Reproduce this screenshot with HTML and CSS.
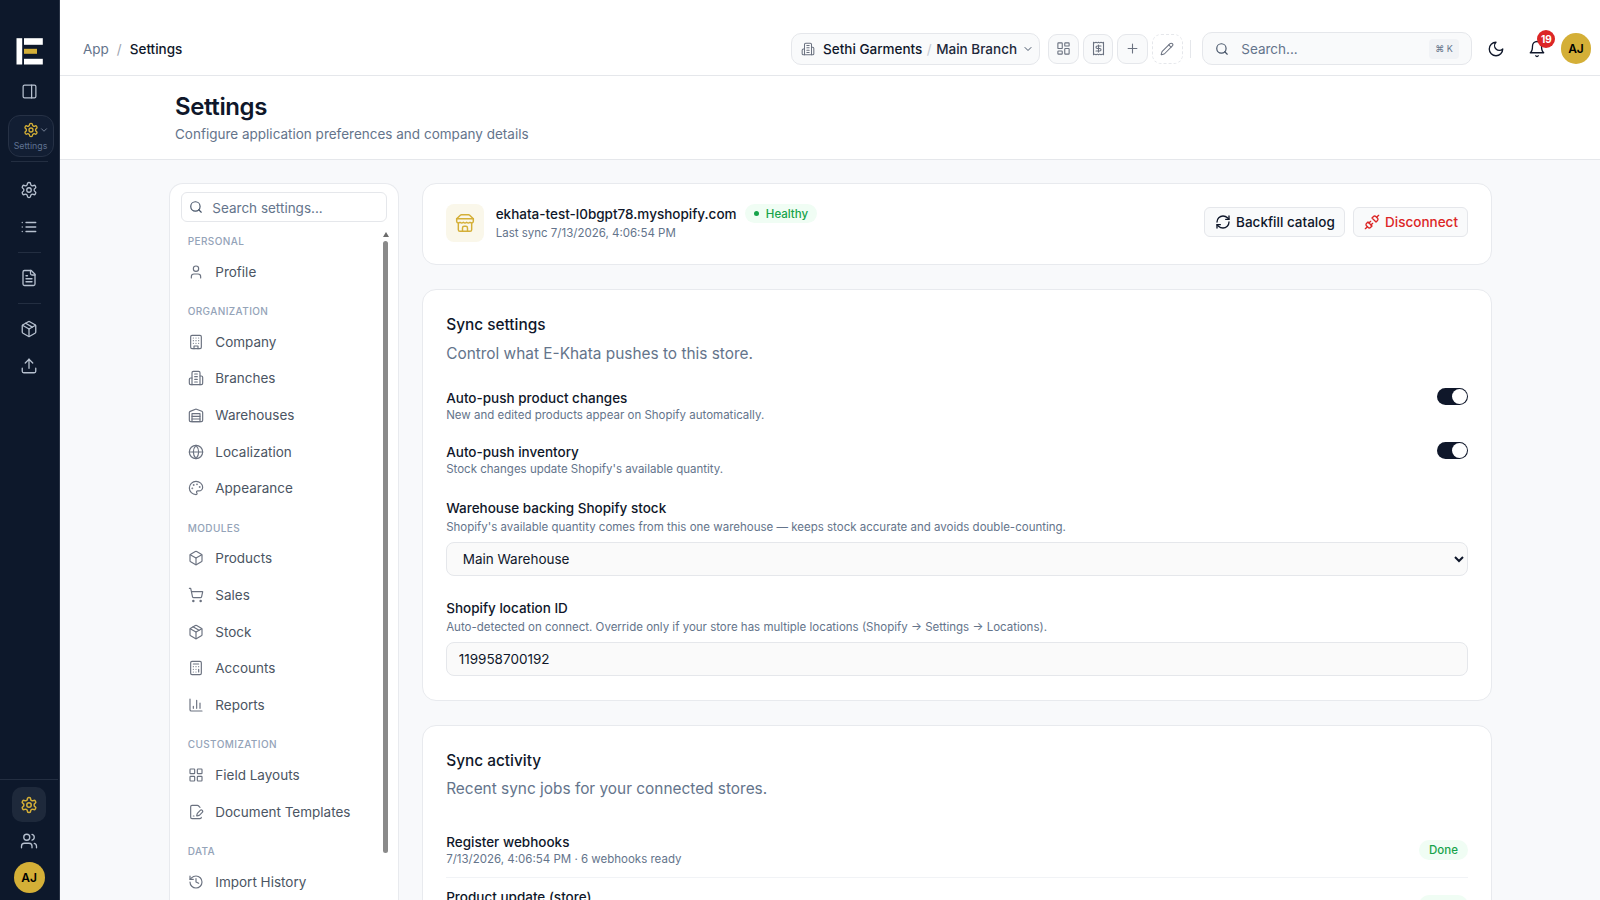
FILE: index.html
```html
<!DOCTYPE html>
<html lang="en">
<head>
<meta charset="utf-8">
<title>Settings</title>
<link rel="stylesheet" href="styles.css">
</head>
<body>
<svg class="sprite" xmlns="http://www.w3.org/2000/svg">
<symbol id="i-panel" viewBox="0 0 24 24"><rect x="3" y="3" width="18" height="18" rx="2"/><path d="M15 3v18"/></symbol>
<symbol id="i-gear" viewBox="0 0 24 24"><path d="M12.22 2h-.44a2 2 0 0 0-2 2v.18a2 2 0 0 1-1 1.73l-.43.25a2 2 0 0 1-2 0l-.15-.08a2 2 0 0 0-2.73.73l-.22.38a2 2 0 0 0 .73 2.73l.15.1a2 2 0 0 1 1 1.72v.51a2 2 0 0 1-1 1.74l-.15.09a2 2 0 0 0-.73 2.73l.22.38a2 2 0 0 0 2.73.73l.15-.08a2 2 0 0 1 2 0l.43.25a2 2 0 0 1 1 1.73V20a2 2 0 0 0 2 2h.44a2 2 0 0 0 2-2v-.18a2 2 0 0 1 1-1.73l.43-.25a2 2 0 0 1 2 0l.15.08a2 2 0 0 0 2.73-.73l.22-.39a2 2 0 0 0-.73-2.73l-.15-.08a2 2 0 0 1-1-1.74v-.5a2 2 0 0 1 1-1.74l.15-.09a2 2 0 0 0 .73-2.73l-.22-.38a2 2 0 0 0-2.73-.73l-.15.08a2 2 0 0 1-2 0l-.43-.25a2 2 0 0 1-1-1.73V4a2 2 0 0 0-2-2z"/><circle cx="12" cy="12" r="3"/></symbol>
<symbol id="i-list" viewBox="0 0 24 24"><path d="M3 12h.01M3 18h.01M3 6h.01M8 12h13M8 18h13M8 6h13"/></symbol>
<symbol id="i-file" viewBox="0 0 24 24"><path d="M15 2H6a2 2 0 0 0-2 2v16a2 2 0 0 0 2 2h12a2 2 0 0 0 2-2V7Z"/><path d="M14 2v4a2 2 0 0 0 2 2h4"/><path d="M10 9H8M16 13H8M16 17H8"/></symbol>
<symbol id="i-package" viewBox="0 0 24 24"><path d="M11 21.73a2 2 0 0 0 2 0l7-4A2 2 0 0 0 21 16V8a2 2 0 0 0-1-1.73l-7-4a2 2 0 0 0-2 0l-7 4A2 2 0 0 0 3 8v8a2 2 0 0 0 1 1.73z"/><path d="M12 22V12"/><path d="m3.3 7 8.7 5 8.7-5"/><path d="m7.5 4.27 9 5.15"/></symbol>
<symbol id="i-box" viewBox="0 0 24 24"><path d="M21 8a2 2 0 0 0-1-1.73l-7-4a2 2 0 0 0-2 0l-7 4A2 2 0 0 0 3 8v8a2 2 0 0 0 1 1.73l7 4a2 2 0 0 0 2 0l7-4A2 2 0 0 0 21 16Z"/><path d="m3.3 7 8.7 5 8.7-5"/><path d="M12 22V12"/></symbol>
<symbol id="i-upload" viewBox="0 0 24 24"><path d="M21 15v4a2 2 0 0 1-2 2H5a2 2 0 0 1-2-2v-4"/><path d="m17 8-5-5-5 5"/><path d="M12 3v12"/></symbol>
<symbol id="i-users" viewBox="0 0 24 24"><path d="M16 21v-2a4 4 0 0 0-4-4H6a4 4 0 0 0-4 4v2"/><circle cx="9" cy="7" r="4"/><path d="M22 21v-2a4 4 0 0 0-3-3.87"/><path d="M16 3.13a4 4 0 0 1 0 7.75"/></symbol>
<symbol id="i-chevron" viewBox="0 0 24 24"><path d="m6 9 6 6 6-6"/></symbol>
<symbol id="i-search" viewBox="0 0 24 24"><circle cx="11" cy="11" r="8"/><path d="m21 21-4.3-4.3"/></symbol>
<symbol id="i-user" viewBox="0 0 24 24"><path d="M19 21v-2a4 4 0 0 0-4-4H9a4 4 0 0 0-4 4v2"/><circle cx="12" cy="7" r="4"/></symbol>
<symbol id="i-building" viewBox="0 0 24 24"><rect x="4" y="2" width="16" height="20" rx="2"/><path d="M9 22v-4h6v4"/><path d="M8 6h.01M16 6h.01M12 6h.01M12 10h.01M12 14h.01M16 10h.01M16 14h.01M8 10h.01M8 14h.01"/></symbol>
<symbol id="i-building2" viewBox="0 0 24 24"><path d="M6 22V4a2 2 0 0 1 2-2h8a2 2 0 0 1 2 2v18Z"/><path d="M6 12H4a2 2 0 0 0-2 2v6a2 2 0 0 0 2 2h2"/><path d="M18 9h2a2 2 0 0 1 2 2v9a2 2 0 0 1-2 2h-2"/><path d="M10 6h4M10 10h4M10 14h4M10 18h4"/></symbol>
<symbol id="i-warehouse" viewBox="0 0 24 24"><path d="M22 8.35V20a2 2 0 0 1-2 2H4a2 2 0 0 1-2-2V8.35A2 2 0 0 1 3.26 6.5l8-3.2a2 2 0 0 1 1.48 0l8 3.2A2 2 0 0 1 22 8.35Z"/><path d="M6 18h12M6 14h12"/><rect x="6" y="10" width="12" height="12"/></symbol>
<symbol id="i-globe" viewBox="0 0 24 24"><circle cx="12" cy="12" r="10"/><path d="M12 2a14.5 14.5 0 0 0 0 20 14.5 14.5 0 0 0 0-20"/><path d="M2 12h20"/></symbol>
<symbol id="i-palette" viewBox="0 0 24 24"><circle cx="13.5" cy="6.5" r=".5"/><circle cx="17.5" cy="10.5" r=".5"/><circle cx="8.5" cy="7.5" r=".5"/><circle cx="6.5" cy="12.5" r=".5"/><path d="M12 2C6.5 2 2 6.5 2 12s4.5 10 10 10c.926 0 1.648-.746 1.648-1.688 0-.437-.18-.835-.437-1.125-.29-.289-.438-.652-.438-1.125a1.64 1.64 0 0 1 1.668-1.668h1.996c3.051 0 5.555-2.503 5.555-5.554C21.965 6.012 17.461 2 12 2z"/></symbol>
<symbol id="i-cart" viewBox="0 0 24 24"><circle cx="8" cy="21" r="1"/><circle cx="19" cy="21" r="1"/><path d="M2.05 2.05h2l2.66 12.42a2 2 0 0 0 2 1.58h9.78a2 2 0 0 0 1.95-1.57l1.65-7.43H5.12"/></symbol>
<symbol id="i-calc" viewBox="0 0 24 24"><rect x="4" y="2" width="16" height="20" rx="2"/><path d="M8 6h8M16 14v4M16 10h.01M12 10h.01M8 10h.01M12 14h.01M8 14h.01M12 18h.01M8 18h.01"/></symbol>
<symbol id="i-chart" viewBox="0 0 24 24"><path d="M3 3v16a2 2 0 0 0 2 2h16"/><path d="M18 17V9M13 17V5M8 17v-3"/></symbol>
<symbol id="i-grid" viewBox="0 0 24 24"><rect x="3" y="3" width="7" height="7" rx="1"/><rect x="14" y="3" width="7" height="7" rx="1"/><rect x="14" y="14" width="7" height="7" rx="1"/><rect x="3" y="14" width="7" height="7" rx="1"/></symbol>
<symbol id="i-filepen" viewBox="0 0 24 24"><path d="m18 5-2.414-2.414A2 2 0 0 0 14.172 2H6a2 2 0 0 0-2 2v16a2 2 0 0 0 2 2h12a2 2 0 0 0 2-2"/><path d="M21.378 12.626a1 1 0 0 0-3.004-3.004l-4.01 4.012a2 2 0 0 0-.506.854l-.837 2.87a.5.5 0 0 0 .62.62l2.87-.837a2 2 0 0 0 .854-.506z"/><path d="M8 18h1"/></symbol>
<symbol id="i-history" viewBox="0 0 24 24"><path d="M3 12a9 9 0 1 0 9-9 9.75 9.75 0 0 0-6.74 2.74L3 8"/><path d="M3 3v5h5"/><path d="M12 7v5l4 2"/></symbol>
<symbol id="i-dash" viewBox="0 0 24 24"><rect x="3" y="3" width="7" height="9" rx="1"/><rect x="14" y="3" width="7" height="5" rx="1"/><rect x="14" y="12" width="7" height="9" rx="1"/><rect x="3" y="16" width="7" height="5" rx="1"/></symbol>
<symbol id="i-receipt" viewBox="0 0 24 24"><path d="M4 2v20l2-1 2 1 2-1 2 1 2-1 2 1 2-1 2 1V2l-2 1-2-1-2 1-2-1-2 1-2-1-2 1Z"/><path d="M16 8h-6a2 2 0 1 0 0 4h4a2 2 0 1 1 0 4H8"/><path d="M12 17.5v-11"/></symbol>
<symbol id="i-plus" viewBox="0 0 24 24"><path d="M5 12h14M12 5v14"/></symbol>
<symbol id="i-pencil" viewBox="0 0 24 24"><path d="M21.174 6.812a1 1 0 0 0-3.986-3.987L3.842 16.174a2 2 0 0 0-.5.83l-1.321 4.352a.5.5 0 0 0 .623.622l4.353-1.32a2 2 0 0 0 .83-.497z"/><path d="m15 5 4 4"/></symbol>
<symbol id="i-moon" viewBox="0 0 24 24"><path d="M12 3a6 6 0 0 0 9 9 9 9 0 1 1-9-9Z"/></symbol>
<symbol id="i-bell" viewBox="0 0 24 24"><path d="M6 8a6 6 0 0 1 12 0c0 7 3 9 3 9H3s3-2 3-9"/><path d="M10.3 21a1.94 1.94 0 0 0 3.4 0"/></symbol>
<symbol id="i-store" viewBox="0 0 24 24"><path d="m2 7 4.41-4.41A2 2 0 0 1 7.83 2h8.34a2 2 0 0 1 1.42.59L22 7"/><path d="M4 12v8a2 2 0 0 0 2 2h12a2 2 0 0 0 2-2v-8"/><path d="M15 22v-4a2 2 0 0 0-2-2h-2a2 2 0 0 0-2 2v4"/><path d="M2 7h20"/><path d="M22 7v3a2 2 0 0 1-2 2a2.7 2.7 0 0 1-1.59-.63.7.7 0 0 0-.82 0A2.7 2.7 0 0 1 16 12a2.7 2.7 0 0 1-1.59-.63.7.7 0 0 0-.82 0A2.7 2.7 0 0 1 12 12a2.7 2.7 0 0 1-1.59-.63.7.7 0 0 0-.82 0A2.7 2.7 0 0 1 8 12a2.7 2.7 0 0 1-1.59-.63.7.7 0 0 0-.82 0A2.7 2.7 0 0 1 4 12a2 2 0 0 1-2-2V7"/></symbol>
<symbol id="i-refresh" viewBox="0 0 24 24"><path d="M3 12a9 9 0 0 1 9-9 9.75 9.75 0 0 1 6.74 2.74L21 8"/><path d="M21 3v5h-5"/><path d="M21 12a9 9 0 0 1-9 9 9.75 9.75 0 0 1-6.74-2.74L3 16"/><path d="M8 16H3v5"/></symbol>
<symbol id="i-unplug" viewBox="0 0 24 24"><path d="m19 5 3-3"/><path d="m2 22 3-3"/><path d="M6.3 20.3a2.4 2.4 0 0 0 3.4 0L12 18l-6-6-2.3 2.3a2.4 2.4 0 0 0 0 3.4Z"/><path d="M7.5 13.5 10 11"/><path d="M10.5 16.5 13 14"/><path d="m12 6 6 6 2.3-2.3a2.4 2.4 0 0 0 0-3.4l-2.6-2.6a2.4 2.4 0 0 0-3.4 0Z"/></symbol>
</svg>

<div class="app">
  <aside class="rail">
    <svg class="logo" viewBox="0 0 27 27" aria-hidden="true">
      <rect x="0.5" y="0.2" width="5.7" height="26.3" fill="#fff"/>
      <rect x="8" y="0.2" width="18.8" height="6.6" fill="#fff"/>
      <rect x="8" y="10.8" width="13" height="5" fill="#d4af37"/>
      <rect x="8" y="20.8" width="18.8" height="5.7" fill="#fff"/>
    </svg>
    <svg class="ic rail-ic rail-panel"><use href="#i-panel"/></svg>
    <div class="rail-pill">
      <div class="rail-pill-top">
        <svg class="ic pill-gear"><use href="#i-gear"/></svg>
        <svg class="ic pill-chev"><use href="#i-chevron"/></svg>
      </div>
      <span class="pill-label">Settings</span>
    </div>
    <div class="rail-sep rail-sep-wide"></div>
    <svg class="ic rail-ic rail-a"><use href="#i-gear"/></svg>
    <svg class="ic rail-ic rail-a"><use href="#i-list"/></svg>
    <div class="rail-sep rail-sep-short"></div>
    <svg class="ic rail-ic rail-d"><use href="#i-file"/></svg>
    <div class="rail-sep rail-sep-short"></div>
    <svg class="ic rail-ic rail-d"><use href="#i-package"/></svg>
    <svg class="ic rail-ic rail-a"><use href="#i-upload"/></svg>
    <div class="rail-foot">
      <div class="rail-active"><svg class="ic pill-gear"><use href="#i-gear"/></svg></div>
      <svg class="ic rail-ic rail-users"><use href="#i-users"/></svg>
      <div class="avatar rail-avatar">AJ</div>
    </div>
  </aside>

  <div class="main">
    <header class="topbar">
      <nav class="crumbs"><span class="crumb-muted">App</span><span class="crumb-slash">/</span><span class="crumb-current">Settings</span></nav>
      <div class="top-right">
        <div class="ctx">
          <svg class="ic ctx-ic"><use href="#i-building2"/></svg>
          <span class="ctx-company">Sethi Garments</span>
          <span class="ctx-slash">/</span>
          <span class="ctx-branch">Main Branch</span>
          <svg class="ic ctx-chev"><use href="#i-chevron"/></svg>
        </div>
        <div class="tools">
          <div class="tool"><svg class="ic tool-ic"><use href="#i-dash"/></svg></div>
          <div class="tool"><svg class="ic tool-ic"><use href="#i-receipt"/></svg></div>
          <div class="tool"><svg class="ic tool-ic"><use href="#i-plus"/></svg></div>
          <div class="tool tool-dashed"><svg class="ic tool-pen"><use href="#i-pencil"/></svg></div>
        </div>
        <div class="top-sep"></div>
        <div class="global-search">
          <svg class="ic gs-ic"><use href="#i-search"/></svg>
          <span class="gs-text">Search...</span>
          <kbd class="gs-kbd">⌘ K</kbd>
        </div>
        <svg class="ic moon"><use href="#i-moon"/></svg>
        <div class="bell-wrap">
          <svg class="ic bell"><use href="#i-bell"/></svg>
          <span class="badge">19</span>
        </div>
        <div class="avatar top-avatar">AJ</div>
      </div>
    </header>

    <section class="page-head">
      <h1 class="page-title">Settings</h1>
      <p class="page-sub">Configure application preferences and company details</p>
    </section>

    <div class="content">
      <aside class="side-card">
        <div class="side-search">
          <svg class="ic ss-ic"><use href="#i-search"/></svg>
          <span class="ss-text">Search settings...</span>
        </div>
        <div class="side-scroll">
          <nav class="side-nav">
            <div class="nav-label">PERSONAL</div>
            <a class="nav-item"><svg class="ic nav-ic"><use href="#i-user"/></svg>Profile</a>
            <div class="nav-label nav-label-gap">ORGANIZATION</div>
            <a class="nav-item"><svg class="ic nav-ic"><use href="#i-building"/></svg>Company</a>
            <a class="nav-item"><svg class="ic nav-ic"><use href="#i-building2"/></svg>Branches</a>
            <a class="nav-item"><svg class="ic nav-ic"><use href="#i-warehouse"/></svg>Warehouses</a>
            <a class="nav-item"><svg class="ic nav-ic"><use href="#i-globe"/></svg>Localization</a>
            <a class="nav-item"><svg class="ic nav-ic"><use href="#i-palette"/></svg>Appearance</a>
            <div class="nav-label nav-label-gap">MODULES</div>
            <a class="nav-item"><svg class="ic nav-ic"><use href="#i-box"/></svg>Products</a>
            <a class="nav-item"><svg class="ic nav-ic"><use href="#i-cart"/></svg>Sales</a>
            <a class="nav-item"><svg class="ic nav-ic"><use href="#i-package"/></svg>Stock</a>
            <a class="nav-item"><svg class="ic nav-ic"><use href="#i-calc"/></svg>Accounts</a>
            <a class="nav-item"><svg class="ic nav-ic"><use href="#i-chart"/></svg>Reports</a>
            <div class="nav-label nav-label-gap">CUSTOMIZATION</div>
            <a class="nav-item"><svg class="ic nav-ic"><use href="#i-grid"/></svg>Field Layouts</a>
            <a class="nav-item"><svg class="ic nav-ic"><use href="#i-filepen"/></svg>Document Templates</a>
            <div class="nav-label nav-label-gap">DATA</div>
            <a class="nav-item"><svg class="ic nav-ic"><use href="#i-history"/></svg>Import History</a>
          </nav>
          <div class="fake-scrollbar">
            <span class="sb-arrow"></span>
            <span class="sb-thumb"></span>
          </div>
        </div>
      </aside>

      <div class="panels">
        <section class="card store-card">
          <div class="store-icon"><svg class="ic store-ic"><use href="#i-store"/></svg></div>
          <div class="store-info">
            <div class="store-line">
              <span class="store-name">ekhata-test-l0bgpt78.myshopify.com</span>
              <span class="pill pill-health"><span class="dot"></span>Healthy</span>
            </div>
            <div class="store-sync">Last sync 7/13/2026, 4:06:54 PM</div>
          </div>
          <div class="store-actions">
            <button class="btn"><svg class="ic btn-ic"><use href="#i-refresh"/></svg>Backfill catalog</button>
            <button class="btn btn-danger"><svg class="ic btn-ic"><use href="#i-unplug"/></svg>Disconnect</button>
          </div>
        </section>

        <section class="card pad-card">
          <h2 class="card-title">Sync settings</h2>
          <p class="card-desc">Control what E-Khata pushes to this store.</p>
          <div class="toggle-row toggle-first">
            <div>
              <div class="field-label">Auto-push product changes</div>
              <div class="field-help">New and edited products appear on Shopify automatically.</div>
            </div>
            <span class="switch"></span>
          </div>
          <div class="toggle-row toggle-second">
            <div>
              <div class="field-label">Auto-push inventory</div>
              <div class="field-help">Stock changes update Shopify's available quantity.</div>
            </div>
            <span class="switch"></span>
          </div>
          <div class="field field-wh">
            <div class="field-label">Warehouse backing Shopify stock</div>
            <div class="field-help">Shopify's available quantity comes from this one warehouse — keeps stock accurate and avoids double-counting.</div>
            <select class="control control-select"><option>Main Warehouse</option></select>
          </div>
          <div class="field field-loc">
            <div class="field-label">Shopify location ID</div>
            <div class="field-help">Auto-detected on connect. Override only if your store has multiple locations (Shopify → Settings → Locations).</div>
            <input class="control" value="119958700192">
          </div>
        </section>

        <section class="card pad-card">
          <h2 class="card-title">Sync activity</h2>
          <p class="card-desc">Recent sync jobs for your connected stores.</p>
          <div class="job job-first">
            <div>
              <div class="field-label">Register webhooks</div>
              <div class="field-help">7/13/2026, 4:06:54 PM · 6 webhooks ready</div>
            </div>
            <span class="pill pill-done">Done</span>
          </div>
          <div class="job">
            <div>
              <div class="field-label">Product update (store)</div>
              <div class="field-help">7/13/2026, 4:06:10 PM</div>
            </div>
            <span class="pill pill-done">Done</span>
          </div>
        </section>
      </div>
    </div>
  </div>
</div>
</body>
</html>
```
FILE: styles.css
```css
* { box-sizing: border-box; }
html, body { margin: 0; height: 100%; overflow: hidden; }
body { font-family: Inter, "Liberation Sans", sans-serif; color: #0f172a; background: #fff; font-size: 13.5px; }
h1, h2, p { margin: 0; }
.sprite { display: none; }
.ic { fill: none; stroke: currentColor; stroke-width: 2; stroke-linecap: round; stroke-linejoin: round; flex: none; display: block; }

.app { display: flex; height: 900px; }

/* rail */
.rail { width: 60px; flex: none; height: 900px; background: #0d182b; border-right: 1px solid #2a3446; padding-right: 1px; display: flex; flex-direction: column; align-items: center; }
.logo { width: 27px; height: 27px; margin-top: 37.5px; flex: none; }
.rail-ic { width: 18px; height: 18px; color: #b6c0cf; stroke-width: 1.75; }
.rail-panel { width: 17px; height: 17px; margin-top: 18px; }
.rail-pill { width: 46px; height: 42px; margin-top: 15px; margin-left: 3px; border: 1px solid #263145; border-radius: 12px; background: #121e33; display: flex; flex-direction: column; align-items: center; padding-top: 6px; flex: none; }
.rail-pill-top { display: flex; align-items: center; margin-left: 11px; height: 16px; }
.pill-gear { width: 16px; height: 16px; color: #d4af37; }
.pill-chev { width: 10px; height: 10px; color: #8592a6; }
.pill-label { font-size: 8.8px; line-height: 11px; color: #5f7291; margin-top: 2.5px; }
.rail-sep { height: 1px; background: #232e41; flex: none; }
.rail-sep-wide { width: 37px; margin-top: 4px; }
.rail-a { margin-top: 19px; }
.rail-sep-short { width: 23px; margin-top: 16px; }
.rail-d { margin-top: 16px; }
.rail-foot { margin-top: auto; width: 100%; border-top: 1px solid #232e41; display: flex; flex-direction: column; align-items: center; padding-top: 7px; height: 121px; flex: none; }
.rail-active { width: 34px; height: 35px; border-radius: 10px; background: #1e293b; display: flex; align-items: center; justify-content: center; flex: none; }
.rail-active .pill-gear { width: 18px; height: 18px; }
.rail-users { margin-top: 10px; }
.avatar { border-radius: 50%; background: #d4af37; color: #000; font-weight: 600; display: flex; align-items: center; justify-content: center; flex: none; }
.rail-avatar { width: 31px; height: 31px; font-size: 12px; margin-top: 12px; }

/* main */
.main { flex: 1; min-width: 0; display: flex; flex-direction: column; height: 900px; }
.topbar { height: 76px; flex: none; padding: 22px 8.7px 0 23px; border-bottom: 1px solid #e5e7eb; display: flex; align-items: center; justify-content: space-between; background: #fff; }
.crumbs { display: flex; align-items: center; font-size: 13.5px; line-height: 20px; }
.crumb-muted { color: #64748b; }
.crumb-slash { color: #9ca3af; margin: 0 8px; }
.crumb-current { color: #0f172a; font-weight: 500; }
.top-right { display: flex; align-items: center; }
.ctx { width: 249px; height: 32px; background: #f9fafb; border: 1px solid #e5e7eb; border-radius: 10px; display: flex; align-items: center; padding: 0 0 0 9px; font-size: 13.5px; white-space: nowrap; }
.ctx-ic { width: 14px; height: 14px; color: #6b7280; stroke-width: 1.75; margin-right: 8px; }
.ctx-company { color: #0f172a; font-weight: 500; }
.ctx-slash { color: #c5cad3; margin: 0 4.5px; }
.ctx-branch { color: #1e293b; font-weight: 500; }
.ctx-chev { width: 12px; height: 12px; color: #475569; margin-left: 4.7px; }
.tools { display: flex; gap: 4px; margin-left: 8px; }
.tool { width: 30.67px; height: 30px; border: 1px solid #e5e7eb; border-radius: 9px; background: #f9fafb; display: flex; align-items: center; justify-content: center; }
.tool-dashed { border-style: dashed; background: #fff; }
.tool-ic { width: 15px; height: 15px; color: #6b7280; stroke-width: 1.75; }
.tool-pen { width: 14px; height: 14px; color: #6b7280; stroke-width: 1.75; }
.top-sep { width: 1px; height: 18px; background: #e5e7eb; margin: 0 11px 0 7px; }
.global-search { width: 270px; height: 33px; background: #f9fafb; border: 1px solid #e5e7eb; border-radius: 10px; display: flex; align-items: center; padding: 0 12px 0 12.3px; }
.gs-ic { width: 14px; height: 14px; color: #475569; margin-right: 12.3px; }
.gs-text { flex: 1; font-size: 13.5px; color: #64748b; }
.gs-kbd { font-family: Inter, "Noto Sans", "DejaVu Sans", sans-serif; font-size: 9px; line-height: 20px; height: 20px; width: 29.3px; text-align: center; background: #f1f3f6; border-radius: 4px; color: #64748b; }
.moon { width: 18px; height: 18px; color: #0f172a; stroke-width: 1.75; margin-left: 15px; }
.bell-wrap { position: relative; width: 18px; height: 18px; margin-left: 23px; }
.bell { width: 18px; height: 18px; color: #0f172a; stroke-width: 1.75; }
.badge { position: absolute; top: -9.7px; left: 0; margin-left: 9.7px; width: 18px; height: 18px; background: #dc2626; color: #fff; border-radius: 50%; font-size: 10px; font-weight: 700; line-height: 18px; text-align: center; }
.top-avatar { width: 30.67px; height: 30.67px; font-size: 12px; margin-left: 15px; }

.page-head { height: 84px; flex: none; padding: 16px 0 0 115px; border-bottom: 1px solid #e5e7eb; background: #fff; }
.page-title { font-size: 24px; line-height: 30px; font-weight: 600; letter-spacing: -.4px; color: #0f172a; }
.page-sub { font-size: 13.5px; line-height: 20px; color: #64748b; margin-top: 2px; }

.content { flex: 1; min-height: 0; background: #f8f9fb; display: grid; grid-template-columns: 230px 1069.8px; column-gap: 23.5px; align-items: start; padding: 23.27px 108px 0 108.7px; overflow: hidden; }

/* side card */
.side-card { background: #fff; border: 1px solid #e8eaee; border-bottom: 0; border-radius: 14px 14px 0 0; padding: 7.4px 8px 0 11.6px; height: 760px; display: flex; flex-direction: column; }
.side-search { width: 205.4px; height: 30.33px; flex: none; border: 1px solid #e5e7eb; border-radius: 6px; display: flex; align-items: center; padding: 0 7px; }
.ss-ic { width: 14px; height: 14px; color: #475569; margin-right: 9px; }
.ss-text { color: #64748b; font-size: 13.5px; padding-top: 2px; }
.side-scroll { display: flex; flex: 1; min-height: 0; overflow: hidden; }
.side-nav { flex: 1; min-width: 0; }
.nav-label { font-size: 10px; line-height: 14px; font-weight: 500; letter-spacing: .4px; color: #94a3b8; padding-left: 6.4px; margin-top: 12px; margin-bottom: 5.3px; }
.nav-label-gap { margin-top: 14.1px; }
.nav-item { display: flex; align-items: center; height: 36.67px; padding-left: 7px; font-size: 13.5px; color: #4b5563; }
.nav-ic { width: 16px; height: 16px; color: #6b7280; stroke-width: 1.75; margin-right: 11px; }
.fake-scrollbar { width: 8px; flex: none; display: flex; flex-direction: column; align-items: center; padding-top: 10px; }
.sb-arrow { width: 0; height: 0; flex: none; border-left: 3.5px solid transparent; border-right: 3.5px solid transparent; border-bottom: 5px solid #6b6b6b; }
.sb-thumb { width: 5.4px; height: 612px; background: #8a8a8a; border-radius: 3px; margin-top: 3.7px; flex: none; }

/* panels */
.panels { display: flex; flex-direction: column; gap: 24px; min-width: 0; }
.card { background: #fff; border: 1px solid #e8eaee; border-radius: 14px; flex: none; }
.store-card { height: 82px; display: flex; align-items: flex-start; padding: 19.4px 23px 0 23px; }
.store-icon { width: 38px; height: 38px; border-radius: 8px; background: #faf7ea; display: flex; align-items: center; justify-content: center; flex: none; }
.store-ic { width: 20px; height: 20px; color: #d4af37; stroke-width: 1.75; }
.store-info { margin-left: 11.5px; flex: 1; }
.store-line { display: flex; align-items: center; height: 20px; }
.store-name { font-size: 13.5px; font-weight: 500; color: #0f172a; }
.pill { display: inline-flex; align-items: center; border-radius: 999px; background: #f0fdf4; color: #16a34a; font-size: 11.5px; font-weight: 500; flex: none; }
.pill-health { height: 18.7px; padding: 0 9px; margin-left: 8.3px; }
.dot { width: 5px; height: 5px; border-radius: 50%; background: #16a34a; margin-right: 7px; }
.store-sync { font-size: 11.5px; line-height: 16px; color: #64748b; margin-top: 1px; }
.store-actions { display: flex; gap: 8.3px; margin-top: 3.6px; }
.btn { height: 30px; font: 500 13.5px Inter, sans-serif; background: #f9fafb; border: 1px solid #e5e7eb; border-radius: 6px; display: flex; align-items: center; gap: 5px; padding: 0 9px 0 10px; color: #0f172a; }
.btn-ic { width: 16px; height: 16px; }
.btn-danger { color: #dc2626; }

.pad-card { padding: 23px 23px 23.5px 23px; }
.card-title { font-size: 15.4px; line-height: 24px; font-weight: 500; color: #0f172a; }
.card-desc { font-size: 15.4px; line-height: 22px; color: #64748b; margin-top: 5.5px; }
.toggle-row { display: flex; justify-content: space-between; align-items: flex-start; }
.toggle-first { margin-top: 24px; }
.toggle-second { margin-top: 20.2px; }
.field-label { font-size: 13.5px; line-height: 18px; font-weight: 500; color: #0f172a; }
.field-help { font-size: 11.5px; line-height: 16px; color: #64748b; }
.switch { width: 31px; height: 17px; margin-top: -1px; border-radius: 9px; background: #0f172a; position: relative; flex: none; }
.switch::after { content: ""; position: absolute; top: .75px; right: .75px; width: 15.5px; height: 15.5px; border-radius: 50%; background: #fff; }
.field .field-help { margin-top: 1.5px; }
.field-wh { margin-top: 22.5px; }
.field-loc { margin-top: 23.3px; }
.control { display: block; width: 100%; height: 34px; margin-top: 7.2px; background: #fafafa; border: 1px solid #e5e7eb; border-radius: 8px; font: 13.5px Inter, sans-serif; color: #0f172a; padding: 0 11.5px; }
.job { display: flex; justify-content: space-between; align-items: center; padding: 10px 0; }
.job-first { margin-top: 23px; border-bottom: 1px solid #f1f3f6; }
.pill-done { height: 19.3px; width: 49px; justify-content: center; }
```
